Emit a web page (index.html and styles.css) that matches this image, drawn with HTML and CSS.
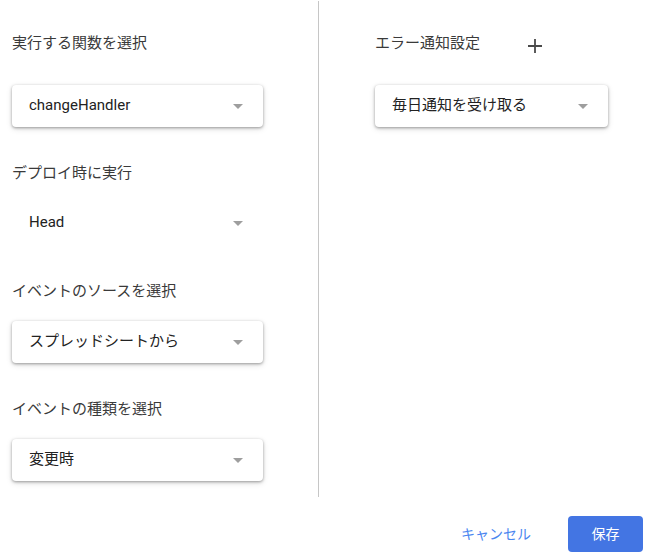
FILE: index.html
```html
<!DOCTYPE html>
<html lang="ja">
<head>
<meta charset="utf-8">
<link rel="stylesheet" href="styles.css">
</head>
<body>
<div class="page">
  <div class="main">
    <div class="left">
      <div class="label l1">実行する関数を選択</div>
      <div class="select s1"><span>changeHandler</span><i class="arrow"></i></div>
      <div class="label l2">デプロイ時に実行</div>
      <div class="select flat s2"><span>Head</span><i class="arrow"></i></div>
      <div class="label l3">イベントのソースを選択</div>
      <div class="select s3"><span>スプレッドシートから</span><i class="arrow"></i></div>
      <div class="label l4">イベントの種類を選択</div>
      <div class="select s4"><span>変更時</span><i class="arrow"></i></div>
    </div>
    <div class="right">
      <div class="rhead">
        <div class="label">エラー通知設定</div>
        <svg class="plus" width="14" height="14" viewBox="0 0 14 14"><path d="M7 0V14M0 7H14" stroke="#4a4a4a" stroke-width="1.8" fill="none"/></svg>
      </div>
      <div class="select wide"><span>毎日通知を受け取る</span><i class="arrow"></i></div>
    </div>
  </div>
  <div class="footer">
    <button class="btn cancel">キャンセル</button>
    <button class="btn save">保存</button>
  </div>
</div>
</body>
</html>
```
FILE: styles.css
```css
html, body {
  margin: 0;
  padding: 0;
  background: #fff;
}
body {
  font-family: Roboto, "Noto Sans CJK JP", sans-serif;
  color: #222;
}
.page {
  width: 656px;
  height: 559px;
  display: flex;
  flex-direction: column;
}
.main {
  display: flex;
  height: 496px;
  margin-top: 1px;
}
.left {
  width: 306px;
  padding-left: 12px;
  padding-top: 32px;
  border-right: 1px solid #c6c6c6;
  display: flex;
  flex-direction: column;
}
.label {
  font-size: 15px;
  line-height: 20px;
  height: 20px;
  color: #3a3a3a;
}
.l2 { margin-top: 36px; }
.l3 { margin-top: 37px; }
.l4 { margin-top: 36px; }
.select {
  box-sizing: border-box;
  width: 251px;
  height: 42px;
  display: flex;
  align-items: center;
  justify-content: space-between;
  padding: 0 20px 3px 17px;
  border-radius: 4px;
  background: #fff;
  box-shadow: 0 1px 3px rgba(0,0,0,0.35), 0 2px 6px rgba(0,0,0,0.12);
  font-size: 15px;
  color: #222;
}
.select span {
  line-height: 20px;
}
.select .arrow {
  margin-top: 3px;
}
.select.flat { box-shadow: none; }
.s1 { margin-top: 32px; }
.s2 { margin-top: 19px; }
.s3 { margin-top: 20px; }
.s4 { margin-top: 20px; }
.arrow {
  width: 0;
  height: 0;
  border-left: 5.5px solid transparent;
  border-right: 5.5px solid transparent;
  border-top: 5.5px solid #9e9e9e;
}
.right {
  padding-left: 56px;
  padding-top: 32px;
  display: flex;
  flex-direction: column;
}
.rhead {
  display: flex;
  align-items: center;
  height: 20px;
}
.plus {
  margin-left: 48px;
  margin-top: 5px;
}
.select.wide {
  width: 233px;
  margin-top: 32px;
  padding-right: 20px;
}
.footer {
  display: flex;
  justify-content: flex-end;
  align-items: center;
  margin-top: 19px;
  padding-right: 13px;
}
.btn {
  font-family: Roboto, "Noto Sans CJK JP", sans-serif;
  font-size: 14px;
  border: none;
  background: none;
  height: 36px;
  padding-bottom: 3px;
  border-radius: 4px;
  cursor: pointer;
}
.cancel {
  color: #4a86f0;
  padding-left: 10px;
  padding-right: 10px;
  margin-right: 27px;
}
.save {
  width: 75px;
  background: #4375e3;
  color: #fff;
}
```
